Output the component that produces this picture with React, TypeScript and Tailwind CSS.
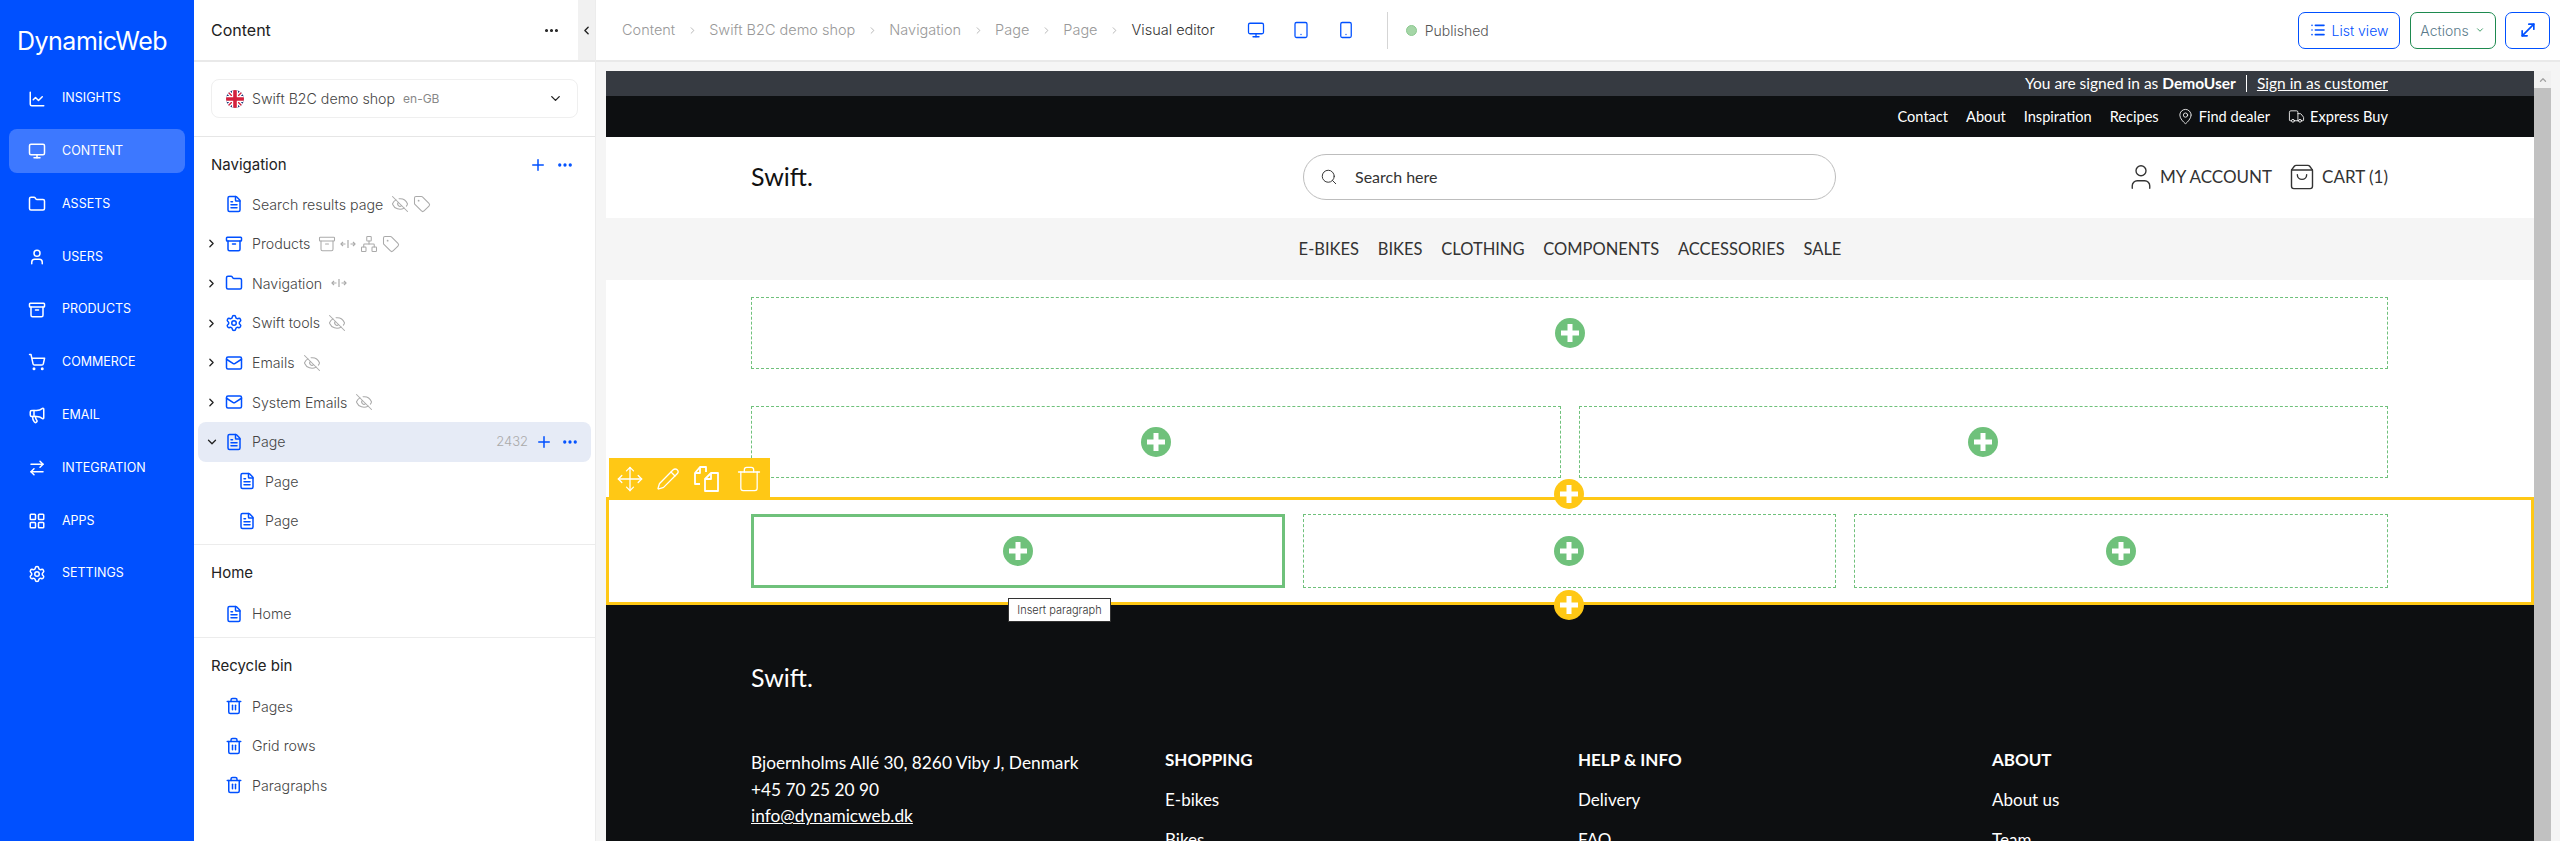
import React from "react";
import {
  ChartLine, Monitor, Folder, User, Archive, ShoppingCart, Megaphone, ArrowRightLeft, LayoutGrid, Settings,
  FileText, Mail, Trash2, Trash, EyeOff, Tag, Network, Ellipsis, Plus, ChevronRight, ChevronDown, ChevronLeft,
  Tablet, Smartphone, List, MoveDiagonal, Search, MapPin, Truck, ShoppingBag, Move, Pencil, ChevronUp,
} from "lucide-react";

const navItems = [
  { label: "INSIGHTS", Icon: ChartLine },
  { label: "CONTENT", Icon: Monitor, active: true },
  { label: "ASSETS", Icon: Folder },
  { label: "USERS", Icon: User },
  { label: "PRODUCTS", Icon: Archive },
  { label: "COMMERCE", Icon: ShoppingCart },
  { label: "EMAIL", Icon: Megaphone },
  { label: "INTEGRATION", Icon: ArrowRightLeft },
  { label: "APPS", Icon: LayoutGrid },
  { label: "SETTINGS", Icon: Settings },
];

function Flag() {
  return (
    <svg width="18" height="18" viewBox="0 0 18 18" className="shrink-0">
      <defs>
        <clipPath id="flagc"><circle cx="9" cy="9" r="9" /></clipPath>
      </defs>
      <g clipPath="url(#flagc)">
        <rect width="18" height="18" fill="#1f3a7a" />
        <path d="M0 0 18 18M18 0 0 18" stroke="#fff" strokeWidth="4" />
        <path d="M0 0 18 18M18 0 0 18" stroke="#d4213d" strokeWidth="1.4" />
        <path d="M9 0V18M0 9H18" stroke="#fff" strokeWidth="6" />
        <path d="M9 0V18M0 9H18" stroke="#d4213d" strokeWidth="3.6" />
      </g>
    </svg>
  );
}

function Spread() {
  return (
    <svg width="16" height="10" viewBox="0 0 16 10" fill="none" stroke="#aaa" strokeWidth="1.2" className="shrink-0">
      <path d="M8 1V9M1 5H5.5M10.5 5H15" />
      <path d="M3 3 1 5 3 7M13 3 15 5 13 7" />
    </svg>
  );
}

const Gray = { EyeOff, Tag, Archive, Network };

function GrayIcon({ name }: { name: keyof typeof Gray }) {
  const I = Gray[name];
  return <I size={18} strokeWidth={1.4} className="text-[#aaaaaa] shrink-0" />;
}

function Row({
  Icon, label, chevron, indent, active, children,
}: {
  Icon: React.ComponentType<any>; label: string; chevron?: "right" | "down"; indent?: boolean; active?: boolean; children?: React.ReactNode;
}) {
  return (
    <div className={`h-[39.6px] mx-[4px] pl-[13px] pr-[12px] flex items-center rounded-[8px] ${active ? "bg-[#e6ebf6]" : ""}`}>
      <span className="w-[14px] flex items-center shrink-0">
        {chevron === "right" && <ChevronRight size={13} strokeWidth={2.4} className="text-[#222] -ml-[6px]" />}
        {chevron === "down" && <ChevronDown size={14} strokeWidth={2.2} className="text-[#222] -ml-[6px]" />}
      </span>
      <Icon size={18} strokeWidth={2} className={`text-[#0050ff] shrink-0 ${indent ? "ml-[13px]" : "ml-0"}`} />
      <span className="ml-[9px] text-[14.2px] font-light text-[#444]">{label}</span>
      {children}
    </div>
  );
}

function Section({ title, actions, children, last, tight }: { title: string; actions?: boolean; children: React.ReactNode; last?: boolean; tight?: boolean }) {
  return (
    <section className={`${last ? "pt-[13px]" : "pt-[14px] border-b border-[#ececec]"} ${tight ? "pb-[3px]" : "pb-[4px]"}`}>
      <div className="h-[29px] mb-[6px] pl-[17px] pr-[21px] flex items-center justify-between">
        <h2 className="text-[15px] font-normal text-[#222]">{title}</h2>
        {actions && (
          <div className="flex items-center gap-[9px] text-[#0050ff]">
            <Plus size={18} strokeWidth={2} />
            <Ellipsis size={18} strokeWidth={2.4} />
          </div>
        )}
      </div>
      {children}
    </section>
  );
}

function Panel() {
  return (
    <div className="w-[402px] shrink-0 flex flex-col bg-white border-r border-[#ececec]">
      <div className="h-[62px] shrink-0 border-b-2 border-[#e9e9e9] flex items-stretch">
        <div className="flex-1 pl-[17px] pr-[18px] flex items-center justify-between">
          <h1 className="text-[16px] font-normal text-[#222] -mt-[1px]">Content</h1>
          <Ellipsis size={17} strokeWidth={2.4} className="text-[#222]" />
        </div>
        <div className="w-[17px] bg-[#f1f1f1] flex items-center justify-center">
          <ChevronLeft size={13} strokeWidth={2.6} className="text-[#222]" />
        </div>
      </div>
      <div className="pt-[17px] pb-[17.5px] px-[17px] border-b border-[#e6e6e6]">
        <div className="h-[39px] w-[367px] rounded-[8px] border border-[#efefef] pl-[14px] pr-[14px] flex items-center">
          <Flag />
          <span className="ml-[8px] text-[14.2px] font-light text-[#444]">Swift B2C demo shop</span>
          <span className="ml-[8px] text-[12px] text-[#888]">en-GB</span>
          <ChevronDown size={15} strokeWidth={2.2} className="ml-auto text-[#222]" />
        </div>
      </div>
      <Section title="Navigation" actions tight>
        <div className="-mt-[1px]">
          <Row Icon={FileText} label="Search results page">
            <span className="ml-[8px] flex items-center gap-[4px]"><GrayIcon name="EyeOff" /><GrayIcon name="Tag" /></span>
          </Row>
          <Row Icon={Archive} label="Products" chevron="right">
            <span className="ml-[8px] flex items-center gap-[4px]"><GrayIcon name="Archive" /><Spread /><GrayIcon name="Network" /><GrayIcon name="Tag" /></span>
          </Row>
          <Row Icon={Folder} label="Navigation" chevron="right">
            <span className="ml-[9px] flex items-center"><Spread /></span>
          </Row>
          <Row Icon={Settings} label="Swift tools" chevron="right">
            <span className="ml-[8px] flex items-center"><GrayIcon name="EyeOff" /></span>
          </Row>
          <Row Icon={Mail} label="Emails" chevron="right">
            <span className="ml-[8px] flex items-center"><GrayIcon name="EyeOff" /></span>
          </Row>
          <Row Icon={Mail} label="System Emails" chevron="right">
            <span className="ml-[8px] flex items-center"><GrayIcon name="EyeOff" /></span>
          </Row>
          <Row Icon={FileText} label="Page" chevron="down" active>
            <span className="ml-auto text-[13px] font-light text-[#aaa]">2432</span>
            <Plus size={18} strokeWidth={2} className="ml-[7px] text-[#0050ff]" />
            <Ellipsis size={18} strokeWidth={2.4} className="ml-[8px] text-[#0050ff]" />
          </Row>
          <Row Icon={FileText} label="Page" indent />
          <Row Icon={FileText} label="Page" indent />
        </div>
      </Section>
      <Section title="Home">
        <Row Icon={FileText} label="Home" />
      </Section>
      <Section title="Recycle bin" last>
        <Row Icon={Trash2} label="Pages" />
        <Row Icon={Trash2} label="Grid rows" />
        <Row Icon={Trash2} label="Paragraphs" />
      </Section>
    </div>
  );
}

function TopBar() {
  const crumbs = ["Content", "Swift B2C demo shop", "Navigation", "Page", "Page"];
  return (
    <header className="h-[62px] shrink-0 border-b-2 border-[#e9e9e9] pl-[26px] pr-[10px] flex items-center bg-white">
      <nav className="flex items-center text-[14.5px] font-light text-[#999]">
        {crumbs.map((c, i) => (
          <React.Fragment key={i}>
            <span>{c}</span>
            <ChevronRight size={11} strokeWidth={1.5} className="mx-[11.5px] text-[#999]" />
          </React.Fragment>
        ))}
        <span className="text-[#333]">Visual editor</span>
      </nav>
      <div className="ml-[32px] flex items-center gap-[27px] text-[#0050ff]">
        <Monitor size={18} strokeWidth={1.7} />
        <Tablet size={18} strokeWidth={1.7} />
        <Smartphone size={18} strokeWidth={1.7} />
      </div>
      <div className="ml-[32px] h-[37px] border-l border-[#d5d5d5]" />
      <span className="ml-[18px] w-[11px] h-[11px] rounded-full bg-[#a5d6a7] border border-[#8cc990]" />
      <span className="ml-[8px] text-[14px] font-light text-[#555]">Published</span>
      <div className="ml-auto flex items-center gap-[9.5px] text-[14px]">
        <button className="h-[37px] w-[102px] rounded-[7px] border border-[#0050ff] text-[#0050ff] font-light flex items-center justify-center gap-[6px]">
          <List size={16} strokeWidth={2.4} /> List view
        </button>
        <button className="h-[37px] w-[86px] rounded-[7px] border border-[#1e8a4f] text-[#5a7a8a] font-light flex items-center justify-center gap-[6px]">
          Actions <ChevronDown size={10} strokeWidth={2} className="text-[#1e8a4f]" />
        </button>
        <button className="h-[37px] w-[45px] rounded-[7px] border border-[#0050ff] text-[#0050ff] flex items-center justify-center">
          <MoveDiagonal size={20} strokeWidth={2} />
        </button>
      </div>
    </header>
  );
}

function AddCircle({ yellow }: { yellow?: boolean }) {
  return (
    <span className={`w-[30px] h-[30px] rounded-full flex items-center justify-center ${yellow ? "bg-[#ffc815]" : "bg-[#6fc17b]"}`}>
      <svg width="18" height="18" viewBox="0 0 18 18" fill="#fff"><path d="M6.5 0h5v6.5H18v5h-6.5V18h-5v-6.5H0v-5h6.5z" /></svg>
    </span>
  );
}

function Slot({ solid }: { solid?: boolean }) {
  return (
    <div className={`flex items-center justify-center h-full ${solid ? "border-[3px] border-solid border-[#6fc17b]" : "border border-dashed border-[#6fc17b]"}`}>
      <AddCircle />
    </div>
  );
}

function CopyDocs() {
  return (
    <svg width="26" height="26" viewBox="0 0 26 26" fill="none" stroke="#fff" strokeWidth="1.8" strokeLinejoin="round" className="shrink-0">
      <path d="M7 18H2V7l5-6h6v5" />
      <path d="M2 7h5V1" />
      <path d="M18 7h7v18H12V13z" />
      <path d="M12 13h6V7" />
    </svg>
  );
}

function Site() {
  return (
    <div className="flex-1 min-w-0 flex flex-col bg-white [font-family:Lato,sans-serif] relative">
      <div className="h-[25px] shrink-0 bg-[#363a41] pl-[145px] pr-[146px] flex items-center justify-end text-white text-[15.5px]">
        <span>You are signed in as <b className="font-bold">DemoUser</b></span>
        <span className="mx-[10px] h-[17px] border-l border-white" />
        <span className="underline">Sign in as customer</span>
      </div>
      <div className="h-[41px] shrink-0 bg-[#0d0f11] pl-[145px] pr-[146px] flex items-center justify-end gap-[18px] text-white text-[14.6px]">
        <span>Contact</span>
        <span>About</span>
        <span>Inspiration</span>
        <span>Recipes</span>
        <span className="flex items-center gap-[5px]"><MapPin size={17} strokeWidth={1.2} />Find dealer</span>
        <span className="flex items-center gap-[5px]"><Truck size={17} strokeWidth={1.2} />Express Buy</span>
      </div>
      <div className="h-[81px] shrink-0 pl-[145px] pr-[146px] pb-[2px] flex items-center justify-between">
        <span className="w-[552px] text-[25px] text-[#111]">Swift.</span>
        <div className="w-[533px] h-[46px] rounded-full border border-[#bdbdbd] pl-[16px] flex items-center gap-[17px] text-[16px] text-[#333]">
          <Search size={18} strokeWidth={1.3} />
          Search here
        </div>
        <div className="flex-1 flex items-center justify-end text-[17px] text-[#333]">
          <User size={30} strokeWidth={1.1} />
          <span className="ml-[4px]">MY ACCOUNT</span>
          <ShoppingBag size={28} strokeWidth={1.2} className="ml-[16px]" />
          <span className="ml-[6px]">CART (1)</span>
        </div>
      </div>
      <nav className="h-[62px] shrink-0 bg-[#f5f5f5] flex items-center justify-center gap-[18.8px] text-[16.5px] text-[#333]">
        <span>E-BIKES</span><span>BIKES</span><span>CLOTHING</span><span>COMPONENTS</span><span>ACCESSORIES</span><span>SALE</span>
      </nav>
      <div className="pl-[145px] pr-[146px] pt-[17px]">
        <div className="h-[72px]"><Slot /></div>
        <div className="h-[72px] mt-[37px] grid grid-cols-2 gap-[18px]"><Slot /><Slot /></div>
      </div>
      <div className="relative z-10 mt-[19px] h-[108px] shrink-0 border-[3px] border-[#ffc815] pl-[142px] pr-[143px] pt-[14px] pb-[14px] bg-white">
        <div className="h-full grid grid-cols-3 gap-[18px]"><Slot solid /><Slot /><Slot /></div>
        <div className="absolute left-0 -top-[42px] w-[161px] h-[42px] bg-[#ffc815] flex items-center pl-[7px] text-white">
          <Move size={28} strokeWidth={1.1} className="shrink-0" />
          <Pencil size={24} strokeWidth={1.3} className="ml-[12px] shrink-0" />
          <span className="ml-[13px]"><CopyDocs /></span>
          <Trash size={28} strokeWidth={1.1} className="ml-[16px] shrink-0" />
        </div>
        <div className="absolute left-[945px] -top-[21px]"><AddCircle yellow /></div>
        <div className="absolute left-[945px] top-[90px]"><AddCircle yellow /></div>
        <div className="absolute left-[399px] top-[98px] w-[103px] h-[24px] bg-white border border-[#333] flex items-center justify-center text-[11px] font-light text-[#333] [font-family:Inter,sans-serif]">
          Insert paragraph
        </div>
      </div>
      <footer className="flex-1 bg-[#0d0f11] text-white pl-[145px] pt-[55px] overflow-hidden">
        <div className="text-[25px] leading-[34px]">Swift.</div>
        <div className="mt-[54px] grid grid-cols-[414px_413px_414px_1fr] text-[17px] leading-[24px]">
          <div className="pt-[2px] leading-[26.5px] text-[17.3px]">
            <div>Bjoernholms Allé 30, 8260 Viby J, Denmark</div>
            <div>+45 70 25 20 90</div>
            <div className="underline">info@dynamicweb.dk</div>
          </div>
          {[
            ["SHOPPING", "E-bikes", "Bikes"],
            ["HELP & INFO", "Delivery", "FAQ"],
            ["ABOUT", "About us", "Team"],
          ].map(([h, a, b]) => (
            <div key={h} className="flex flex-col gap-[16px]">
              <div className="font-bold">{h}</div>
              <div>{a}</div>
              <div>{b}</div>
            </div>
          ))}
        </div>
      </footer>
    </div>
  );
}

export default function App() {
  return (
    <div className="w-[2560px] h-[841px] overflow-hidden flex bg-white [font-family:Inter,sans-serif]">
      <aside className="w-[194px] shrink-0 bg-[#0050ff] text-white">
        <div className="pl-[17px] pt-[24px] h-[76.5px] text-[25px] leading-[34px] tracking-[-0.5px]">DynamicWeb</div>
        <ul className="flex flex-col gap-[8.8px] px-[9px]">
          {navItems.map(({ label, Icon, active }) => (
            <li key={label} className={`h-[44px] pl-[19px] flex items-center gap-[16px] rounded-[8px] text-[12.5px] ${active ? "bg-[#3d78ff]" : ""}`}>
              <Icon size={18} strokeWidth={2} />
              {label}
            </li>
          ))}
        </ul>
      </aside>
      <Panel />
      <main className="flex-1 min-w-0 flex flex-col">
        <TopBar />
        <div className="flex-1 min-h-0 bg-[#f5f5f5] pl-[10px] pr-[9px] pt-[9px] flex">
          <Site />
          <div className="w-[17px] shrink-0 bg-[#f1f1f1] flex flex-col">
            <div className="h-[17px] flex items-center justify-center">
              <ChevronUp size={10} strokeWidth={3} className="text-[#a3a3a3]" />
            </div>
            <div className="flex-1 bg-[#c1c1c1]" />
          </div>
        </div>
      </main>
    </div>
  );
}
